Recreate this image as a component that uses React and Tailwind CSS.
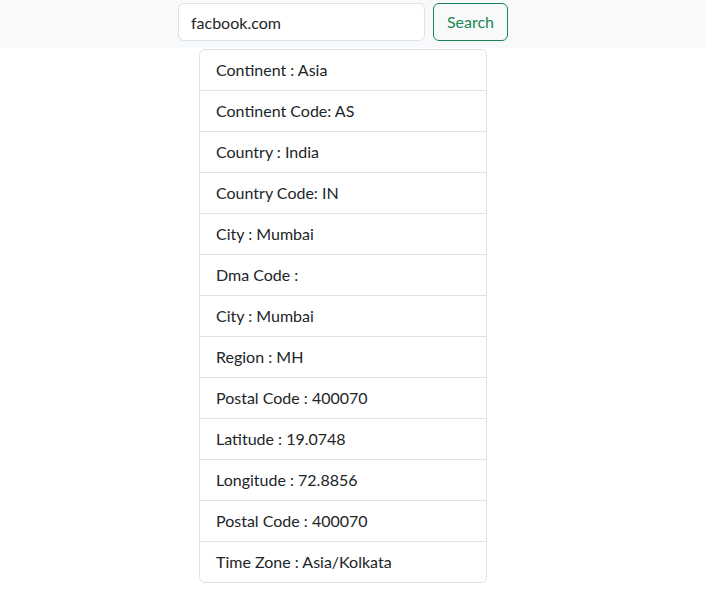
import React, { useState } from 'react';

const rows = [
  'Continent : Asia',
  'Continent Code: AS',
  'Country : India',
  'Country Code: IN',
  'City : Mumbai',
  'Dma Code :',
  'City : Mumbai',
  'Region : MH',
  'Postal Code : 400070',
  'Latitude : 19.0748',
  'Longitude : 72.8856',
  'Postal Code : 400070',
  'Time Zone : Asia/Kolkata'
];

function App() {
  const [domain, setDomain] = useState('facbook.com');

  return (
    <div className="min-h-screen bg-white text-[#212529]" style={{ fontFamily: '"Lato", "Noto Sans", sans-serif' }}>
      {/* Search bar */}
      <div className="bg-[#f8f9fa] h-[48px] flex justify-center items-start pt-[3px] pr-[19px]">
        <div className="flex gap-2">
          <input
            value={domain}
            onChange={(e) => setDomain(e.target.value)}
            className="w-[247px] h-[38px] px-3 border border-[#dee2e6] rounded-md bg-white text-base text-[#212529] focus:outline-none"
          />
          <button className="w-[75px] h-[38px] border border-[#198754] rounded-md text-base text-[#198754]">
            Search
          </button>
        </div>
      </div>

      {/* Result list */}
      <div className="flex justify-center pt-[1px] pr-[19px]">
        <ul className="w-[288px] border border-[#dee2e6] rounded-md">
          {rows.map((row, i) => (
            <li
              key={i}
              className={`px-4 py-2 text-base leading-6 ${i > 0 ? 'border-t border-[#dee2e6]' : ''}`}
            >
              {row}
            </li>
          ))}
        </ul>
      </div>
    </div>
  );
}

export default App;
